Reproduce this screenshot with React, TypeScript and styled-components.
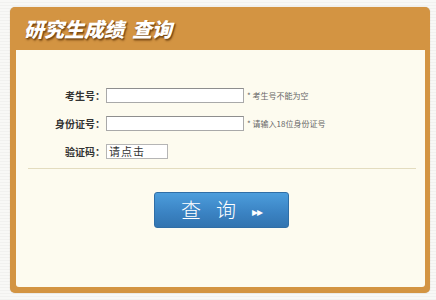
import React from 'react';
import styled, { createGlobalStyle } from 'styled-components';

const GlobalStyle = createGlobalStyle`
  html, body {
    margin: 0;
    padding: 0;
    background: repeating-linear-gradient(#f8f8f6 0px, #f8f8f6 2px, #f1f1ef 2px, #f1f1ef 3px);
    font-family: "Liberation Sans", "Noto Sans CJK SC", sans-serif;
  }
`;

const Page = styled.div`
  width: 436px;
  height: 300px;
  box-sizing: border-box;
  padding: 7px 6px 7px 10px;
`;

const Panel = styled.div`
  width: 420px;
  height: 286px;
  box-sizing: border-box;
  background: #d39442;
  border-radius: 5px;
  padding: 0 5px 6px 6px;
  display: flex;
  flex-direction: column;
  box-shadow: 0 0 1px rgba(120, 70, 10, 0.4);
`;

const Header = styled.div`
  height: 43px;
  display: flex;
  align-items: center;
  padding-left: 8px;
`;

const Title = styled.h1`
  margin: 0;
  font-family: "Noto Sans CJK SC", sans-serif;
  font-size: 20px;
  font-weight: 900;
  font-style: italic;
  color: #ffffff;
  text-shadow: 1px 1px 1px #7a4a14, 1px 2px 2px rgba(80, 40, 0, 0.6);
  white-space: pre;
`;

const TitleTail = styled.span`
  margin-left: 8px;
`;

const Body = styled.div`
  flex: 1;
  background: #fdfbef;
  border-radius: 0 0 3px 3px;
  display: flex;
  flex-direction: column;
  padding-top: 38px;
`;

const Form = styled.div`
  display: grid;
  grid-template-columns: 90px auto 1fr;
  row-gap: 13px;
  align-items: center;
`;

const Label = styled.label`
  text-align: right;
  font-family: "Noto Sans CJK SC", sans-serif;
  font-size: 10px;
  font-weight: 700;
  color: #333;
  line-height: 15px;
  padding-right: 1px;
`;

const Input = styled.input`
  width: 138px;
  height: 15px;
  box-sizing: border-box;
  border: 1px solid #a9a9a9;
  border-top-color: #8e8e8e;
  background: #fff;
  padding: 0 2px;
  margin: 0;
  outline: none;
`;

const Hint = styled.span`
  margin-left: 3px;
  font-family: "Noto Sans CJK SC", sans-serif;
  font-size: 8px;
  color: #666;
  line-height: 15px;
`;

const Captcha = styled.div`
  width: 62px;
  height: 15px;
  box-sizing: border-box;
  border: 1px solid #b5b5b5;
  background: #fff;
  font-family: "Noto Sans CJK SC", sans-serif;
  font-size: 11px;
  line-height: 13px;
  color: #333;
  padding-left: 2px;
  letter-spacing: 1px;
`;

const Divider = styled.hr`
  margin: 9px 9px 0 12px;
  border: none;
  border-top: 1px solid #e3dcbf;
  height: 0;
`;

const ButtonRow = styled.div`
  display: flex;
  justify-content: center;
  padding-top: 23px;
  padding-left: 2px;
`;

const SearchButton = styled.button`
  width: 135px;
  height: 36px;
  border: 1px solid #2f6ea6;
  border-radius: 3px;
  background: linear-gradient(#4c9ddc, #3a82c2 60%, #3274b0);
  color: #fff;
  font-family: "Noto Sans CJK SC", sans-serif;
  font-size: 20px;
  font-weight: 300;
  display: flex;
  align-items: center;
  justify-content: center;
  padding: 0 0 2px 0;
  box-shadow: 0 0 2px rgba(255, 255, 255, 0.9);
  cursor: pointer;
`;

const ButtonText = styled.span`
  letter-spacing: 15px;
`;

const Arrows = styled.span`
  font-size: 12px;
  letter-spacing: -1px;
  margin-left: 1px;
  padding-top: 2px;
`;

export default function App() {
  return (
    <>
      <GlobalStyle />
      <Page>
        <Panel>
          <Header>
            <Title>
              研究生成绩<TitleTail>查询</TitleTail>
            </Title>
          </Header>
          <Body>
            <Form>
              <Label>考生号：</Label>
              <Input type="text" />
              <Hint>* 考生号不能为空</Hint>
              <Label>身份证号：</Label>
              <Input type="text" />
              <Hint>* 请输入18位身份证号</Hint>
              <Label>验证码：</Label>
              <Captcha>请点击</Captcha>
              <span />
            </Form>
            <Divider />
            <ButtonRow>
              <SearchButton>
                <ButtonText>查询</ButtonText>
                <Arrows>▸▸</Arrows>
              </SearchButton>
            </ButtonRow>
          </Body>
        </Panel>
      </Page>
    </>
  );
}
